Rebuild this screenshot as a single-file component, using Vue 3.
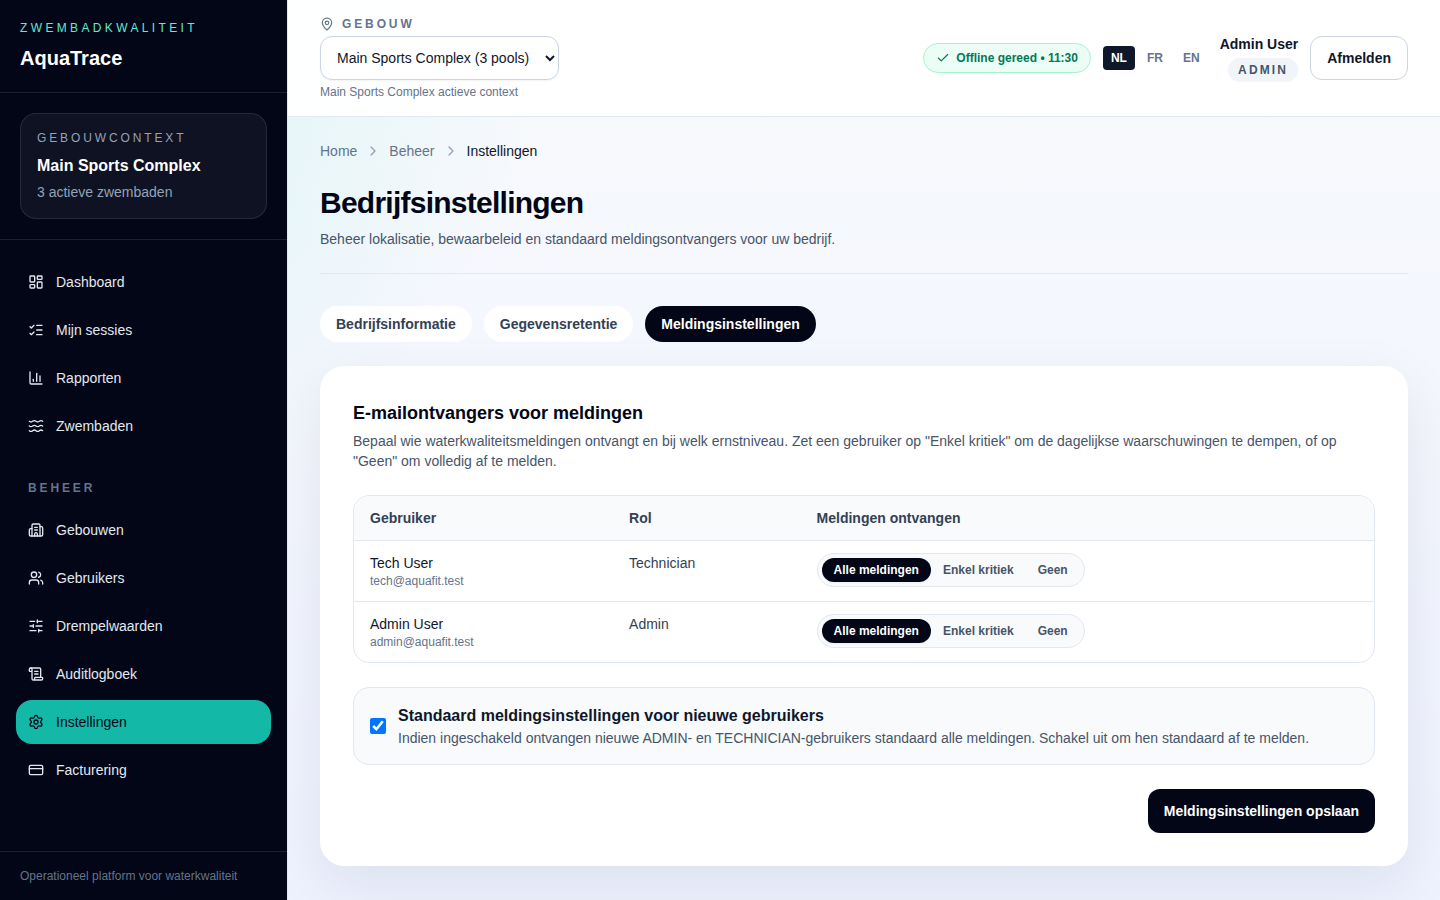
<script setup>
import { ref } from 'vue'

const icons = {
  dashboard: [
    'M4 3h5a1 1 0 0 1 1 1v7a1 1 0 0 1-1 1H4a1 1 0 0 1-1-1V4a1 1 0 0 1 1-1z',
    'M15 3h5a1 1 0 0 1 1 1v3a1 1 0 0 1-1 1h-5a1 1 0 0 1-1-1V4a1 1 0 0 1 1-1z',
    'M15 12h5a1 1 0 0 1 1 1v7a1 1 0 0 1-1 1h-5a1 1 0 0 1-1-1v-7a1 1 0 0 1 1-1z',
    'M4 16h5a1 1 0 0 1 1 1v3a1 1 0 0 1-1 1H4a1 1 0 0 1-1-1v-3a1 1 0 0 1 1-1z',
  ],
  checks: ['M13 5h8', 'M13 12h8', 'M13 19h8', 'm3 17 2 2 4-4', 'm3 7 2 2 4-4'],
  chart: ['M3 3v16a2 2 0 0 0 2 2h16', 'M18 17V9', 'M13 17V5', 'M8 17v-3'],
  waves: ['M2 5q2.5 2 5 0t5 0 5 0 5 0', 'M2 12q2.5 2 5 0t5 0 5 0 5 0', 'M2 19q2.5 2 5 0t5 0 5 0 5 0'],
  building: [
    'M10 12h4',
    'M10 8h4',
    'M14 21v-3a2 2 0 0 0-4 0v3',
    'M6 10H4a2 2 0 0 0-2 2v7a2 2 0 0 0 2 2h16a2 2 0 0 0 2-2V9a2 2 0 0 0-2-2h-2',
    'M6 21V5a2 2 0 0 1 2-2h8a2 2 0 0 1 2 2v16',
  ],
  users: [
    'M16 21v-2a4 4 0 0 0-4-4H6a4 4 0 0 0-4 4v2',
    'M16 3.128a4 4 0 0 1 0 7.744',
    'M22 21v-2a4 4 0 0 0-3-3.87',
    'M5 7a4 4 0 1 0 8 0a4 4 0 1 0-8 0',
  ],
  sliders: ['M10 5H3', 'M12 19H3', 'M14 3v4', 'M16 17v4', 'M21 12h-9', 'M21 19h-5', 'M21 5h-7', 'M8 10v4', 'M8 12H3'],
  scroll: [
    'M15 12h-5',
    'M15 8h-5',
    'M19 17V5a2 2 0 0 0-2-2H4',
    'M8 21h12a2 2 0 0 0 2-2v-1a1 1 0 0 0-1-1H11a1 1 0 0 0-1 1v1a2 2 0 1 1-4 0V5a2 2 0 1 0-4 0v2a1 1 0 0 0 1 1h3',
  ],
  settings: [
    'M9.671 4.136a2.34 2.34 0 0 1 4.659 0 2.34 2.34 0 0 0 3.319 1.915 2.34 2.34 0 0 1 2.33 4.033 2.34 2.34 0 0 0 0 3.831 2.34 2.34 0 0 1-2.33 4.033 2.34 2.34 0 0 0-3.319 1.915 2.34 2.34 0 0 1-4.659 0 2.34 2.34 0 0 0-3.32-1.915 2.34 2.34 0 0 1-2.33-4.033 2.34 2.34 0 0 0 0-3.831A2.34 2.34 0 0 1 6.35 6.051a2.34 2.34 0 0 0 3.319-1.915',
    'M9 12a3 3 0 1 0 6 0a3 3 0 1 0-6 0',
  ],
  card: [
    'M4 5h16a2 2 0 0 1 2 2v10a2 2 0 0 1-2 2H4a2 2 0 0 1-2-2V7a2 2 0 0 1 2-2z',
    'M2 10h20',
  ],
}

const mainNav = [
  { label: 'Dashboard', icon: 'dashboard' },
  { label: 'Mijn sessies', icon: 'checks' },
  { label: 'Rapporten', icon: 'chart' },
  { label: 'Zwembaden', icon: 'waves' },
]
const adminNav = [
  { label: 'Gebouwen', icon: 'building' },
  { label: 'Gebruikers', icon: 'users' },
  { label: 'Drempelwaarden', icon: 'sliders' },
  { label: 'Auditlogboek', icon: 'scroll' },
  { label: 'Instellingen', icon: 'settings', active: true },
  { label: 'Facturering', icon: 'card' },
]

const languages = ['NL', 'FR', 'EN']
const language = ref('NL')

const tabs = ['Bedrijfsinformatie', 'Gegevensretentie', 'Meldingsinstellingen']
const activeTab = ref('Meldingsinstellingen')

const levels = ['Alle meldingen', 'Enkel kritiek', 'Geen']
const recipients = ref([
  { name: 'Tech User', email: 'tech@aquafit.test', role: 'Technician', level: 'Alle meldingen' },
  { name: 'Admin User', email: 'admin@aquafit.test', role: 'Admin', level: 'Alle meldingen' },
])
const notifyNewUsers = ref(true)
</script>

<template>
  <div class="shell">
    <aside class="sidebar">
      <div class="brand">
        <p class="brand-eyebrow">ZWEMBADKWALITEIT</p>
        <p class="brand-name">AquaTrace</p>
      </div>
      <div class="context">
        <div class="context-card">
          <p class="context-eyebrow">GEBOUWCONTEXT</p>
          <p class="context-name">Main Sports Complex</p>
          <p class="context-sub">3 actieve zwembaden</p>
        </div>
      </div>
      <nav class="nav" aria-label="Hoofdnavigatie">
        <div class="nav-group">
          <a v-for="item in mainNav" :key="item.label" href="#" class="nav-link">
            <svg class="icon" viewBox="0 0 24 24" aria-hidden="true">
              <path v-for="d in icons[item.icon]" :key="d" :d="d" />
            </svg>
            <span>{{ item.label }}</span>
          </a>
        </div>
        <p class="nav-heading">BEHEER</p>
        <div class="nav-group">
          <a
            v-for="item in adminNav"
            :key="item.label"
            href="#"
            class="nav-link"
            :class="{ active: item.active }"
            :aria-current="item.active ? 'page' : undefined"
          >
            <svg class="icon" viewBox="0 0 24 24" aria-hidden="true">
              <path v-for="d in icons[item.icon]" :key="d" :d="d" />
            </svg>
            <span>{{ item.label }}</span>
          </a>
        </div>
      </nav>
      <p class="sidebar-foot">Operationeel platform voor waterkwaliteit</p>
    </aside>

    <div class="content">
      <header class="topbar">
        <div class="building">
          <label class="building-label" for="building">
            <svg class="icon icon-small" viewBox="0 0 24 24" aria-hidden="true">
              <path d="M20 10c0 4.993-5.539 10.193-7.399 11.799a1 1 0 0 1-1.202 0C9.539 20.193 4 14.993 4 10a8 8 0 0 1 16 0" />
              <circle cx="12" cy="10" r="3" />
            </svg>
            <span>GEBOUW</span>
          </label>
          <select id="building" class="building-select">
            <option>Main Sports Complex (3 pools)</option>
          </select>
          <p class="building-note">Main Sports Complex actieve context</p>
        </div>
        <div class="tools">
          <div class="status">
            <svg class="icon icon-small" viewBox="0 0 24 24" aria-hidden="true">
              <path d="M20 6 9 17l-5-5" />
            </svg>
            <span>Offline gereed • 11:30</span>
          </div>
          <div class="languages">
            <button
              v-for="code in languages"
              :key="code"
              type="button"
              class="language"
              :class="{ active: code === language }"
              @click="language = code"
            >{{ code }}</button>
          </div>
          <div class="user">
            <span class="user-name">Admin User</span>
            <span class="user-role">ADMIN</span>
          </div>
          <button type="button" class="logout">Afmelden</button>
        </div>
      </header>

      <main class="page">
        <nav class="crumbs" aria-label="Kruimelpad">
          <a href="#">Home</a>
          <svg class="icon crumb-sep" viewBox="0 0 24 24" aria-hidden="true"><path d="m9 18 6-6-6-6" /></svg>
          <a href="#">Beheer</a>
          <svg class="icon crumb-sep" viewBox="0 0 24 24" aria-hidden="true"><path d="m9 18 6-6-6-6" /></svg>
          <span class="crumb-current" aria-current="page">Instellingen</span>
        </nav>

        <div class="page-head">
          <h1>Bedrijfsinstellingen</h1>
          <p>Beheer lokalisatie, bewaarbeleid en standaard meldingsontvangers voor uw bedrijf.</p>
        </div>

        <div class="tabs">
          <button
            v-for="tab in tabs"
            :key="tab"
            type="button"
            class="tab"
            :class="{ active: tab === activeTab }"
            @click="activeTab = tab"
          >{{ tab }}</button>
        </div>

        <section class="panel">
          <div>
            <h2>E-mailontvangers voor meldingen</h2>
            <p class="panel-intro">
              Bepaal wie waterkwaliteitsmeldingen ontvangt en bij welk ernstniveau. Zet een gebruiker op "Enkel kritiek" om de dagelijkse waarschuwingen te dempen, of op "Geen" om volledig af te melden.
            </p>
          </div>

          <div class="table-wrap">
            <table>
              <thead>
                <tr>
                  <th scope="col">Gebruiker</th>
                  <th scope="col">Rol</th>
                  <th scope="col">Meldingen ontvangen</th>
                </tr>
              </thead>
              <tbody>
                <tr v-for="person in recipients" :key="person.email">
                  <td>
                    <div class="person-name">{{ person.name }}</div>
                    <div class="person-email">{{ person.email }}</div>
                  </td>
                  <td class="person-role">{{ person.role }}</td>
                  <td>
                    <div class="levels">
                      <button
                        v-for="level in levels"
                        :key="level"
                        type="button"
                        class="level"
                        :class="{ active: level === person.level }"
                        @click="person.level = level"
                      >{{ level }}</button>
                    </div>
                  </td>
                </tr>
              </tbody>
            </table>
          </div>

          <label class="default-option">
            <input v-model="notifyNewUsers" type="checkbox" />
            <span class="option-text">
              <span class="option-title">Standaard meldingsinstellingen voor nieuwe gebruikers</span>
              <span class="option-note">Indien ingeschakeld ontvangen nieuwe ADMIN- en TECHNICIAN-gebruikers standaard alle meldingen. Schakel uit om hen standaard af te melden.</span>
            </span>
          </label>

          <button type="button" class="save">Meldingsinstellingen opslaan</button>
        </section>
      </main>
    </div>
  </div>
</template>

<style>
body {
  margin: 0;
}
</style>

<style scoped>
.shell,
.shell * {
  box-sizing: border-box;
}
.shell {
  display: flex;
  min-height: 100vh;
  font-family: "Liberation Sans", Arial, sans-serif;
  font-size: 14px;
  line-height: 20px;
  color: #0f172a;
  background:
    radial-gradient(circle at top left, rgba(45, 212, 191, 0.18), transparent 32%),
    linear-gradient(180deg, #f8fafc 0%, #eef2ff 100%);
}
p,
h1,
h2 {
  margin: 0;
}
a {
  color: inherit;
  text-decoration: none;
}
button,
select {
  font-family: inherit;
  font-size: 14px;
  line-height: 20px;
  cursor: pointer;
}
.icon {
  flex: none;
  width: 16px;
  height: 16px;
  fill: none;
  stroke: currentColor;
  stroke-width: 2;
  stroke-linecap: round;
  stroke-linejoin: round;
}
.icon-small {
  width: 14px;
  height: 14px;
}

.sidebar {
  position: sticky;
  top: 0;
  display: flex;
  flex: none;
  flex-direction: column;
  width: 288px;
  height: 100vh;
  border-right: 1px solid #e2e8f0;
  background: #020617;
  background-clip: padding-box;
  color: #e2e8f0;
}
.brand {
  padding: 20px;
  border-bottom: 1px solid rgba(255, 255, 255, 0.1);
}
.brand-eyebrow {
  font-size: 12px;
  line-height: 16px;
  letter-spacing: 0.28em;
  color: #5eead4;
}
.brand-name {
  margin-top: 8px;
  font-size: 20px;
  line-height: 28px;
  font-weight: 600;
  color: #fff;
}
.context {
  padding: 20px;
  border-bottom: 1px solid rgba(255, 255, 255, 0.1);
}
.context-card {
  padding: 16px;
  border: 1px solid rgba(255, 255, 255, 0.1);
  border-radius: 16px;
  background: rgba(255, 255, 255, 0.05);
}
.context-eyebrow {
  font-size: 12px;
  line-height: 16px;
  letter-spacing: 0.24em;
  color: #94a3b8;
}
.context-name {
  margin-top: 8px;
  font-size: 16px;
  line-height: 24px;
  font-weight: 600;
  color: #fff;
}
.context-sub {
  margin-top: 4px;
  color: #94a3b8;
}
.nav {
  flex: 1;
  min-height: 0;
  padding: 20px 16px;
  overflow-y: auto;
}
.nav-group {
  display: flex;
  flex-direction: column;
  gap: 4px;
}
.nav-link {
  display: flex;
  align-items: center;
  gap: 12px;
  min-height: 44px;
  padding: 0 12px;
  border-radius: 16px;
}
.nav-link.active {
  background: #14b8a6;
  color: #020617;
}
.nav-heading {
  margin: 32px 0 12px;
  padding: 0 12px;
  font-size: 12px;
  line-height: 16px;
  font-weight: 600;
  letter-spacing: 0.24em;
  color: #64748b;
}
.sidebar-foot {
  padding: 16px 20px;
  border-top: 1px solid rgba(255, 255, 255, 0.1);
  font-size: 12px;
  line-height: 16px;
  color: #64748b;
}

.content {
  flex: 1;
  min-width: 0;
}
.topbar {
  display: flex;
  align-items: center;
  justify-content: space-between;
  gap: 16px;
  padding: 16px 32px;
  border-bottom: 1px solid #e2e8f0;
  background: rgba(255, 255, 255, 0.95);
}
.building {
  display: flex;
  flex-direction: column;
  align-items: flex-start;
  gap: 4px;
}
.building-label {
  display: flex;
  align-items: center;
  gap: 8px;
  font-size: 12px;
  line-height: 16px;
  font-weight: 600;
  letter-spacing: 0.24em;
  color: #64748b;
}
.building-select {
  min-height: 44px;
  padding: 0 12px;
  border: 1px solid #cbd5e1;
  border-radius: 12px;
  background: #fff;
  color: #0f172a;
  box-shadow: 0 1px 2px rgba(0, 0, 0, 0.05);
}
.building-note {
  font-size: 12px;
  line-height: 16px;
  color: #64748b;
}
.tools {
  display: flex;
  align-items: center;
  gap: 12px;
}
.status {
  display: flex;
  align-items: center;
  gap: 6px;
  padding: 6px 12px;
  border: 1px solid #a7f3d0;
  border-radius: 999px;
  background: #ecfdf5;
  color: #047857;
  font-size: 12px;
  line-height: 16px;
  font-weight: 600;
}
.languages {
  display: flex;
  gap: 4px;
}
.language {
  padding: 4px 8px;
  border: 0;
  border-radius: 4px;
  background: transparent;
  color: #64748b;
  font-size: 12px;
  line-height: 16px;
  font-weight: 600;
}
.language.active {
  background: #0f172a;
  color: #fff;
}
.user {
  display: flex;
  flex-direction: column;
  align-items: flex-end;
  gap: 4px;
}
.user-name {
  font-weight: 600;
}
.user-role {
  padding: 4px 10px;
  border-radius: 999px;
  background: #f1f5f9;
  color: #475569;
  font-size: 12px;
  line-height: 16px;
  font-weight: 600;
  letter-spacing: 0.18em;
}
.logout {
  min-height: 44px;
  padding: 0 16px;
  border: 1px solid #cbd5e1;
  border-radius: 12px;
  background: #fff;
  color: #0f172a;
  font-weight: 600;
}

.page {
  padding: 24px 32px 32px;
}
.crumbs {
  display: flex;
  align-items: center;
  gap: 8px;
  color: #64748b;
}
.crumb-sep {
  color: #94a3b8;
}
.crumb-current {
  color: #0f172a;
}
.page-head {
  margin-top: 24px;
  padding-bottom: 24px;
  border-bottom: 1px solid #e2e8f0;
}
h1 {
  font-size: 30px;
  line-height: 36px;
  font-weight: 600;
  letter-spacing: -0.025em;
  color: #020617;
}
.page-head p {
  margin-top: 8px;
  color: #475569;
}
.tabs {
  display: flex;
  flex-wrap: wrap;
  gap: 12px;
  margin-top: 32px;
}
.tab {
  padding: 8px 16px;
  border: 0;
  border-radius: 999px;
  background: #fff;
  color: #334155;
  font-weight: 600;
}
.tab.active {
  background: #020617;
  color: #fff;
}

.panel {
  display: flex;
  flex-direction: column;
  gap: 24px;
  margin-top: 24px;
  padding: 32px;
  border: 1px solid #fff;
  border-radius: 24px;
  background: #fff;
  box-shadow: 0 20px 60px rgba(15, 23, 42, 0.08);
}
h2 {
  font-size: 18px;
  line-height: 28px;
  font-weight: 600;
  color: #020617;
}
.panel-intro {
  margin-top: 4px;
  color: #475569;
}
.table-wrap {
  overflow: hidden;
  border: 1px solid #e2e8f0;
  border-radius: 16px;
}
table {
  width: 100%;
  border-collapse: collapse;
  text-align: left;
}
th {
  padding: 12px 16px;
  background: #f8fafc;
  color: #334155;
  font-weight: 600;
}
td {
  padding: 12px 16px;
  border-top: 1px solid #e2e8f0;
  vertical-align: top;
}
.person-email {
  font-size: 12px;
  line-height: 16px;
  color: #64748b;
}
.person-role {
  color: #334155;
}
.levels {
  display: inline-flex;
  vertical-align: top;
  padding: 4px;
  border: 1px solid #e2e8f0;
  border-radius: 999px;
  background: #f8fafc;
}
.level {
  padding: 4px 12px;
  border: 0;
  border-radius: 999px;
  background: transparent;
  color: #475569;
  font-size: 12px;
  line-height: 16px;
  font-weight: 600;
}
.level.active {
  background: #020617;
  color: #fff;
  box-shadow: 0 1px 2px rgba(0, 0, 0, 0.05);
}
.default-option {
  display: flex;
  align-items: center;
  gap: 12px;
  padding: 16px;
  border: 1px solid #e2e8f0;
  border-radius: 16px;
  background: #f8fafc;
}
.default-option input {
  flex: none;
  width: 16px;
  height: 16px;
  margin: 0;
}
.option-text {
  display: flex;
  flex-direction: column;
}
.option-title {
  font-size: 16px;
  line-height: 24px;
  font-weight: 600;
}
.option-note {
  color: #475569;
}
.save {
  align-self: flex-end;
  min-height: 44px;
  padding: 0 16px;
  border: 0;
  border-radius: 12px;
  background: #020617;
  color: #fff;
  font-weight: 600;
}
</style>
